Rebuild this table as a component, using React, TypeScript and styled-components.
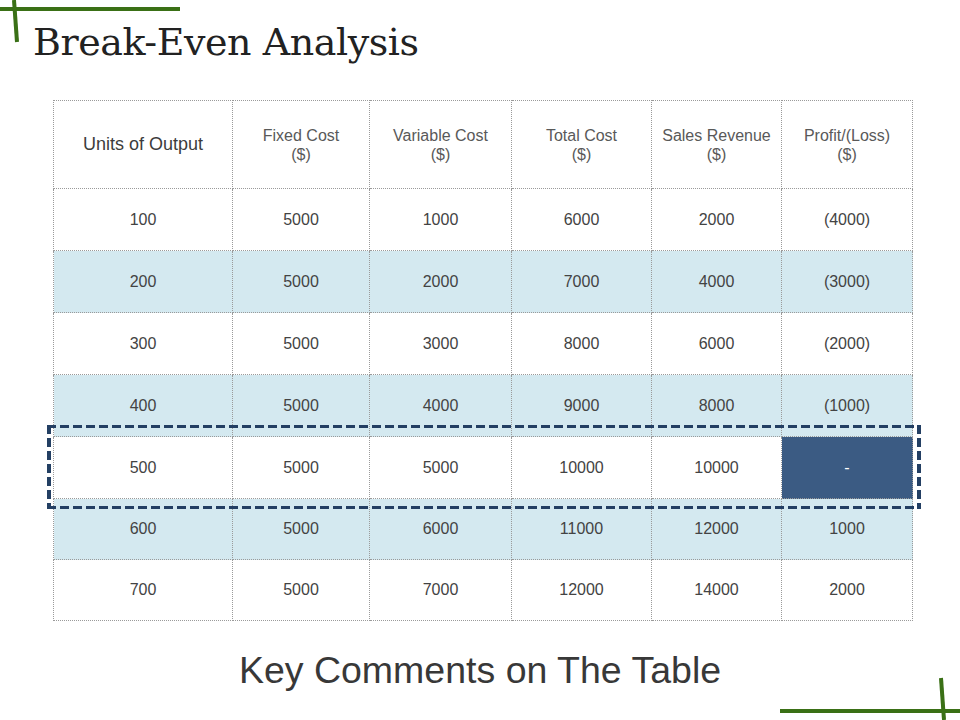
import styled, { createGlobalStyle } from 'styled-components'

const GlobalStyle = createGlobalStyle`
  html, body {
    margin: 0;
    padding: 0;
    background: #ffffff;
  }
  body {
    font-family: 'Liberation Sans', Arial, sans-serif;
  }
`

const Slide = styled.div`
  position: relative;
  width: 960px;
  height: 720px;
  overflow: hidden;
  background: #ffffff;
  display: flex;
  flex-direction: column;
`

const Corner = styled.svg`
  position: absolute;
  pointer-events: none;
`

const Title = styled.h1`
  margin: 16px 0 0 33px;
  font-family: 'DejaVu Serif', Georgia, serif;
  font-weight: 400;
  font-size: 38px;
  line-height: 52px;
  color: #222222;
  letter-spacing: -0.45px;
`

const TableWrap = styled.div`
  position: relative;
  margin: 32px 0 0 53px;
  width: 859px;
`

const Table = styled.table`
  border-collapse: collapse;
  width: 859px;
  table-layout: fixed;
`

const HeadCell = styled.th<{ $big?: boolean }>`
  height: 87px;
  padding: 0;
  border: 1px dotted #9a9a9a;
  font-weight: 400;
  font-size: ${(p) => (p.$big ? '18px' : '16px')};
  line-height: 19px;
  color: ${(p) => (p.$big ? '#3c3c3c' : '#595959')};
  text-align: center;
  vertical-align: middle;
`

const Row = styled.tr<{ $shade: boolean }>`
  background: ${(p) => (p.$shade ? '#d4e9f0' : '#ffffff')};
`

const Cell = styled.td<{ $dark?: boolean; $short?: boolean }>`
  height: ${(p) => (p.$short ? '60px' : '61px')};
  padding: 0;
  border: 1px dotted #9a9a9a;
  font-size: 16px;
  color: ${(p) => (p.$dark ? '#ffffff' : '#434343')};
  background: ${(p) => (p.$dark ? '#3b5b83' : 'transparent')};
  text-align: center;
  vertical-align: middle;
`

const dash = '#233f63'

const Highlight = styled.div`
  position: absolute;
  left: -6px;
  right: -9px;
  top: 325px;
  height: 84px;
  pointer-events: none;
  background:
    repeating-linear-gradient(90deg, ${dash} 0 9px, transparent 9px 13px) top left / 100% 3px no-repeat,
    repeating-linear-gradient(90deg, ${dash} 0 9px, transparent 9px 13px) bottom left / 100% 3px no-repeat,
    repeating-linear-gradient(180deg, ${dash} 0 9px, transparent 9px 13px) top left / 4px 100% no-repeat,
    repeating-linear-gradient(180deg, ${dash} 0 9px, transparent 9px 13px) top right / 4px 100% no-repeat;
`

const Comments = styled.h2`
  margin: 27px 0 0;
  text-align: center;
  font-family: 'Liberation Sans', Arial, sans-serif;
  font-weight: 400;
  font-size: 37.5px;
  line-height: 44px;
  color: #383838;
`

const columns = [
  { w: 179, label: 'Units of Output', big: true },
  { w: 137, label: 'Fixed Cost', sub: '($)' },
  { w: 142, label: 'Variable Cost', sub: '($)' },
  { w: 140, label: 'Total Cost', sub: '($)' },
  { w: 130, label: 'Sales Revenue', sub: '($)' },
  { w: 131, label: 'Profit/(Loss)', sub: '($)' },
]

const rows = [
  ['100', '5000', '1000', '6000', '2000', '(4000)'],
  ['200', '5000', '2000', '7000', '4000', '(3000)'],
  ['300', '5000', '3000', '8000', '6000', '(2000)'],
  ['400', '5000', '4000', '9000', '8000', '(1000)'],
  ['500', '5000', '5000', '10000', '10000', '-'],
  ['600', '5000', '6000', '11000', '12000', '1000'],
  ['700', '5000', '7000', '12000', '14000', '2000'],
]

// shaded rows: 200, 400, 600
const shaded = [1, 3, 5]

export default function App() {
  return (
    <>
      <GlobalStyle />
      <Slide>
        <Corner width="190" height="50" viewBox="0 0 190 50" style={{ left: 0, top: 0 }}>
          <line x1="0" y1="9" x2="180" y2="9" stroke="#3a7016" strokeWidth="4" />
          <line x1="14" y1="0" x2="17" y2="42" stroke="#3a7016" strokeWidth="4" />
        </Corner>
        <Corner width="190" height="50" viewBox="0 0 190 50" style={{ right: 0, bottom: 0 }}>
          <line x1="10" y1="41" x2="190" y2="41" stroke="#3a7016" strokeWidth="4" />
          <line x1="171" y1="8" x2="174" y2="50" stroke="#3a7016" strokeWidth="4" />
        </Corner>

        <Title>Break-Even Analysis</Title>

        <TableWrap>
          <Table>
            <colgroup>
              {columns.map((c, i) => (
                <col key={i} style={{ width: c.w }} />
              ))}
            </colgroup>
            <thead>
              <tr>
                {columns.map((c, i) => (
                  <HeadCell key={i} $big={c.big}>
                    {c.label}
                    {c.sub && (
                      <>
                        <br />
                        {c.sub}
                      </>
                    )}
                  </HeadCell>
                ))}
              </tr>
            </thead>
            <tbody>
              {rows.map((r, i) => (
                <Row key={i} $shade={shaded.includes(i)}>
                  {r.map((v, j) => (
                    <Cell key={j} $dark={i === 4 && j === 5} $short={i >= 5}>
                      {v}
                    </Cell>
                  ))}
                </Row>
              ))}
            </tbody>
          </Table>
          <Highlight />
        </TableWrap>

        <Comments>Key Comments on The Table</Comments>
      </Slide>
    </>
  )
}
